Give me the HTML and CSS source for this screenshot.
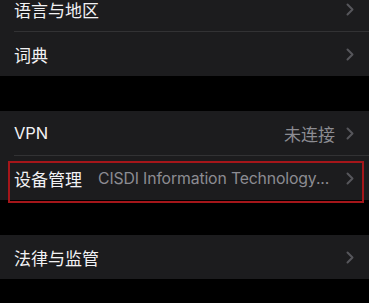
FILE: index.html
```html
<!DOCTYPE html>
<html lang="zh">
<head>
<meta charset="utf-8">
<link rel="stylesheet" href="styles.css">
</head>
<body>
<div class="screen">
  <div class="group first">
    <div class="row sep"><span class="label">语言与地区</span><span class="value"></span><svg class="chev" viewBox="0 0 8 13"><path d="M1.5 1.5 L6.5 6.5 L1.5 11.5"/></svg></div>
    <div class="row"><span class="label">词典</span><span class="value"></span><svg class="chev" viewBox="0 0 8 13"><path d="M1.5 1.5 L6.5 6.5 L1.5 11.5"/></svg></div>
  </div>
  <div class="group">
    <div class="row sep"><span class="label latin">VPN</span><span class="value">未连接</span><svg class="chev" viewBox="0 0 8 13"><path d="M1.5 1.5 L6.5 6.5 L1.5 11.5"/></svg></div>
    <div class="row highlighted"><span class="label">设备管理</span><span class="value latin small">CISDI Information Technology...</span><svg class="chev" viewBox="0 0 8 13"><path d="M1.5 1.5 L6.5 6.5 L1.5 11.5"/></svg><span class="mark"></span></div>
  </div>
  <div class="group">
    <div class="row"><span class="label">法律与监管</span><span class="value"></span><svg class="chev" viewBox="0 0 8 13"><path d="M1.5 1.5 L6.5 6.5 L1.5 11.5"/></svg></div>
  </div>
</div>
</body>
</html>
```

FILE: styles.css
```css
html, body {
  margin: 0;
  padding: 0;
  background: #000;
  height: 100%;
  overflow: hidden;
}
.screen {
  display: flex;
  flex-direction: column;
  gap: 35px;
  font-family: "Noto Sans CJK SC", "Noto Sans", sans-serif;
  font-size: 17px;
  color: #f2f2f4;
}
.group {
  background: #1c1c1e;
  display: flex;
  flex-direction: column;
}
.group.first {
  margin-top: -13px;
}
.row {
  position: relative;
  height: 44px;
  display: flex;
  align-items: center;
  padding: 0 15px 0 14px;
  gap: 11px;
}
.row.sep::after {
  content: "";
  position: absolute;
  left: 14px;
  right: 0;
  bottom: -1px;
  height: 1px;
  background: #323234;
}
.row.sep {
  margin-bottom: 1px;
}
.label {
  flex: none;
  white-space: nowrap;
}
.value {
  flex: 1;
  min-width: 0;
  text-align: right;
  color: #8c8c92;
  white-space: nowrap;
}
.highlighted .value {
  text-align: left;
  padding-left: 5px;
}
.latin {
  font-family: "Inter", "Noto Sans CJK SC", sans-serif;
  font-size: 16.5px;
  letter-spacing: -0.1px;
}
.latin.small {
  font-size: 15.8px;
  letter-spacing: -0.15px;
}
.chev {
  flex: none;
  width: 8px;
  height: 13px;
}
.chev path {
  fill: none;
  stroke: #56565b;
  stroke-width: 2;
  stroke-linecap: round;
  stroke-linejoin: round;
}
.mark {
  position: absolute;
  left: 8px;
  right: 5px;
  top: 5px;
  bottom: -3px;
  border: 2px solid #a5161a;
  pointer-events: none;
}
```
